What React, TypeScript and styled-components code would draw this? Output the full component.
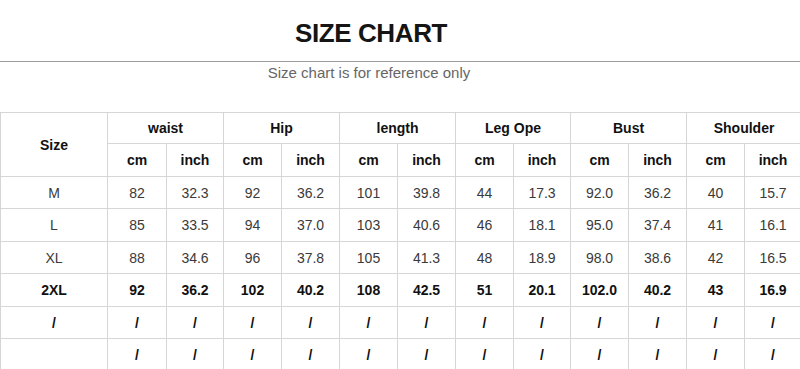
import React from "react";
import styled, { createGlobalStyle } from "styled-components";

const Global = createGlobalStyle`
  html, body { margin: 0; padding: 0; background: #fff; }
  body { font-family: "Liberation Sans", Arial, sans-serif; overflow: hidden; }
`;

const Page = styled.div`
  width: 800px;
  height: 369px;
  overflow: hidden;
  background: #fff;
`;

const TitleBar = styled.div`
  height: 61px;
  display: flex;
  align-items: center;
  justify-content: center;
  border-bottom: 1px solid #9c9c9c;
  padding-right: 58px;
`;

const Title = styled.h1`
  margin: 0;
  margin-top: 6px;
  font-size: 26px;
  font-weight: 700;
  color: #151515;
  letter-spacing: -0.4px;
`;

const Subtitle = styled.p`
  margin: 0 0 30px 0;
  height: 20px;
  line-height: 21px;
  text-align: center;
  font-size: 15px;
  color: #666;
  padding-right: 62px;
`;

const Table = styled.table`
  border-collapse: collapse;
  table-layout: fixed;
  width: 801px;
`;

const Row = styled.tr<{ $h: number }>`
  height: ${(p) => p.$h}px;
`;

const Cell = styled.td<{ $bold?: boolean; $head?: boolean }>`
  border: 1px solid #d6d6d6;
  padding: 0;
  text-align: center;
  vertical-align: middle;
  font-size: 14px;
  line-height: 16px;
  font-weight: ${(p) => (p.$bold || p.$head ? 700 : 400)};
  color: ${(p) => (p.$head || p.$bold ? "#111" : "#3a3a3a")};
`;

const widths = [107, 59, 57, 58, 58, 58, 58, 58, 57, 58, 58, 58, 57];
const groups = ["waist", "Hip", "length", "Leg Ope", "Bust", "Shoulder"];

type DataRow = { size: string; vals: string[]; bold?: boolean };

const rows: DataRow[] = [
  { size: "M", vals: ["82", "32.3", "92", "36.2", "101", "39.8", "44", "17.3", "92.0", "36.2", "40", "15.7"] },
  { size: "L", vals: ["85", "33.5", "94", "37.0", "103", "40.6", "46", "18.1", "95.0", "37.4", "41", "16.1"] },
  { size: "XL", vals: ["88", "34.6", "96", "37.8", "105", "41.3", "48", "18.9", "98.0", "38.6", "42", "16.5"] },
  { size: "2XL", bold: true, vals: ["92", "36.2", "102", "40.2", "108", "42.5", "51", "20.1", "102.0", "40.2", "43", "16.9"] },
  { size: "/", bold: true, vals: Array(12).fill("/") },
  { size: "", bold: true, vals: Array(12).fill("/") },
];

const heights = [32, 33, 32, 33, 32, 32];

export default function App() {
  return (
    <Page>
      <Global />
      <TitleBar>
        <Title>SIZE CHART</Title>
      </TitleBar>
      <Subtitle>Size chart is for reference only</Subtitle>
      <Table>
        <colgroup>
          {widths.map((w, i) => (
            <col key={i} style={{ width: w }} />
          ))}
        </colgroup>
        <tbody>
          <Row $h={31}>
            <Cell $head rowSpan={2}>Size</Cell>
            {groups.map((g) => (
              <Cell $head colSpan={2} key={g}>{g}</Cell>
            ))}
          </Row>
          <Row $h={33}>
            {groups.map((g) => (
              <React.Fragment key={g}>
                <Cell $head>cm</Cell>
                <Cell $head>inch</Cell>
              </React.Fragment>
            ))}
          </Row>
          {rows.map((r, i) => (
            <Row $h={heights[i]} key={i}>
              <Cell $bold={r.bold}>{r.size}</Cell>
              {r.vals.map((v, j) => (
                <Cell $bold={r.bold} key={j}>{v}</Cell>
              ))}
            </Row>
          ))}
        </tbody>
      </Table>
    </Page>
  );
}
